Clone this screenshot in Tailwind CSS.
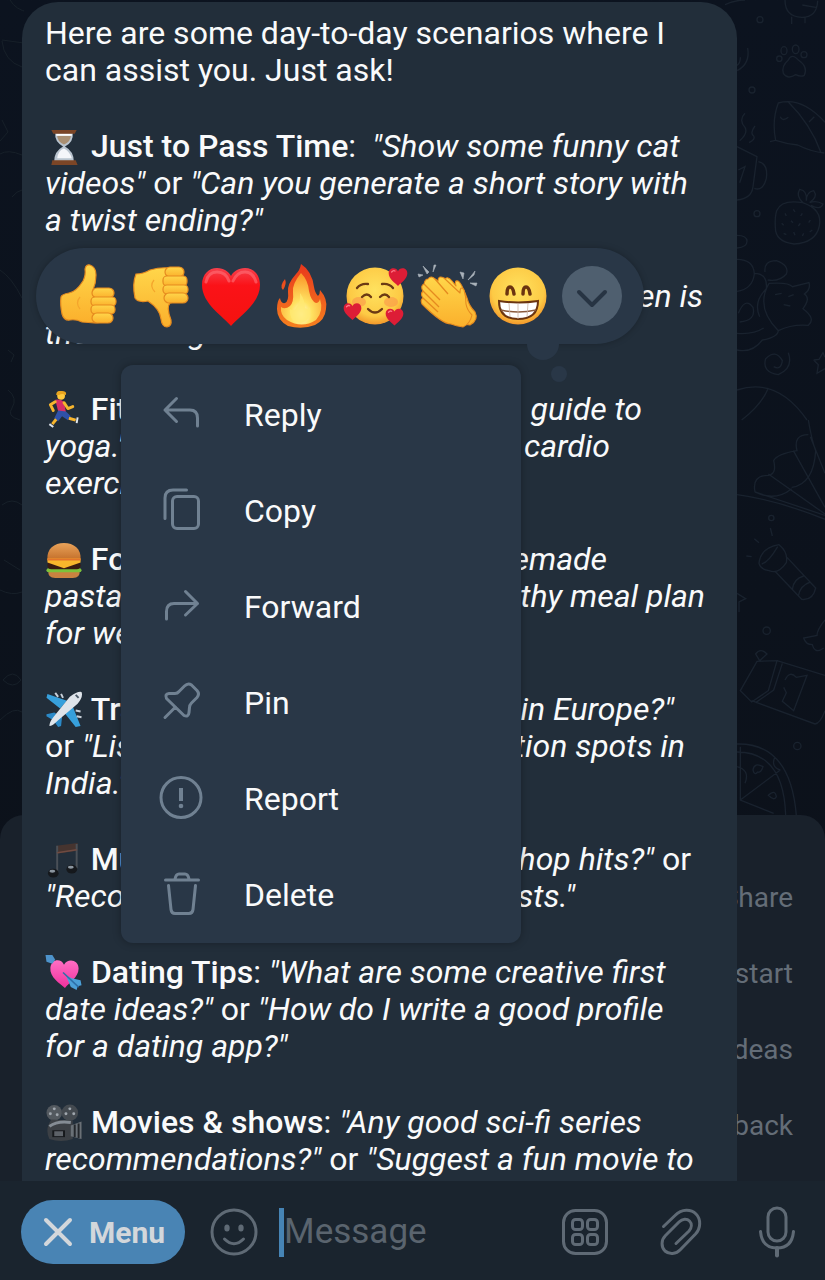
<!DOCTYPE html>
<html lang="en">
<head>
  <meta charset="UTF-8">
  <meta name="viewport" content="width=device-width, initial-scale=1.0">
  <title>Chat</title>
  <script src="https://cdn.jsdelivr.net/npm/@tailwindcss/browser@4"></script>
</head>
<body class="bg-[#0d1420] font-[Roboto,sans-serif]">
  <!-- shared gradients and shapes -->
  <svg class="absolute w-0 h-0" aria-hidden="true">
    <defs>
      <linearGradient id="skin" x1="0" y1="0" x2="0" y2="1"><stop offset="0" stop-color="#ffd64a"/><stop offset="1" stop-color="#fbb02c"/></linearGradient>
      <radialGradient id="face" cx=".5" cy=".4" r=".6"><stop offset="0" stop-color="#ffe25f"/><stop offset=".75" stop-color="#fdca45"/><stop offset="1" stop-color="#f3982b"/></radialGradient>
      <linearGradient id="red" x1="0" y1="0" x2="0" y2="1"><stop offset="0" stop-color="#f5404c"/><stop offset=".3" stop-color="#fb1218"/><stop offset="1" stop-color="#f5120f"/></linearGradient>
      <linearGradient id="outerFire" x1="0" y1="0" x2="0" y2="1"><stop offset="0" stop-color="#e8371c"/><stop offset="1" stop-color="#f5801f"/></linearGradient>
      <radialGradient id="innerFire" cx=".5" cy=".8" r=".75"><stop offset="0" stop-color="#fffbd0"/><stop offset=".35" stop-color="#ffe262"/><stop offset="1" stop-color="#fb9a2a"/></radialGradient>
      <linearGradient id="pink" x1="0" y1="0" x2="0" y2="1"><stop offset="0" stop-color="#ff6fc4"/><stop offset="1" stop-color="#f0309c"/></linearGradient>
      <linearGradient id="bun" x1="0" y1="0" x2="0" y2="1"><stop offset="0" stop-color="#e9a35a"/><stop offset="1" stop-color="#c4702b"/></linearGradient>
      <symbol id="heart" viewBox="0 0 60 60"><path d="M30 57C22 49 2 36 2 19C2 9 9 4 16 4c7 0 12 4 14 9C32 8 37 4 44 4c7 0 14 5 14 15C58 36 38 49 30 57z" fill="#dd1d36"/><path d="M11 15q5-6 10-3" stroke="#ff7a88" stroke-width="4" fill="none" stroke-linecap="round"/></symbol>
    </defs>
  </svg>

  <div class="relative h-screen flex flex-col overflow-hidden">
    <main class="relative flex-1 min-h-0 overflow-hidden bg-linear-to-b from-[#0c131f] to-[#0c1119]">
      <!-- wallpaper doodles -->
      <svg class="absolute left-0 top-0" width="24" height="820" viewBox="0 0 24 820" fill="none" stroke="#172029" stroke-width="1">
        <path d="M10 0q6 10 18 12M2 40l22 3M2 41q2 20 20 26M2 120l6 12-8 9M0 154q8-5 22 1M12 197q5-6 10-7M0 270q12 8 22 28M8 390q10 8 4 18q-6 8 8 12M2 505q10-8 20 0M4 560l16 10M8 350l6 5-3 7M0 590q12 6 22 2M3 680q10-12 18 0q-8 10-18 0M0 720q14-14 22-8"/>
      </svg>
      <svg class="absolute right-0 top-0" width="100" height="840" viewBox="0 0 300 2520" fill="none" stroke="#19222e" stroke-width="4">
        <path d="M180 0q0 50 50 52q46 0 48-50M232 15l44 8M200 50v22M240 50v20M0 14q30-14 60-14"/>
        <circle cx="105" cy="59" r="9"/><circle cx="81" cy="270" r="9"/><circle cx="96" cy="641" r="9"/>
        <path d="M36 212q40-20 32-68M36 196q10-6 10-24"/>
        <path d="M175 220q-6-22 15-40q10-22 30 0q30 20 18 46q-10 6-26-2q-24 16-37-4z"/>
        <ellipse cx="177" cy="152" rx="9" ry="12"/><ellipse cx="212" cy="148" rx="10" ry="13"/><circle cx="237" cy="164" r="9"/><circle cx="163" cy="176" r="8"/>
        <path d="M135 425l17-4q-12-60 8-112q70-20 140 58M188 304q70 70 100 154M152 421q30 10 66 14q40 20 80 24M166 350q6 16 24 2M252 366l16-16"/>
        <path d="M36 440l60 30l-12 90q-4 36-48 40M100 485q30 6 24 50q-10 40-36 30M60 340q-20 20 0 42q10 18-16 40M90 378q-16 22-4 30q6 10-14 20M40 510l20-10l-16 48"/>
        <path d="M155 632q14-34 78-24q60 20 50 70q-10 50-76 54q-56-6-56-50q-2-30 4-50zM234 608q-22-20-10-40q24 4 20 34q0-26 22-30q14 18-12 36q20-8 40 4q-8 20-36 4"/>
        <path d="M180 640l4 8M205 628l5 8M232 640l-5 8M170 670l6 6M198 662l6 6M226 670l-6 8M256 660l-5 8M176 700l8 4M206 696l4 10M236 700l-4 8M262 690l-8 6"/>
        <path d="M36 706q30 0 30 18t-30 20M36 778q50 0 52 44q-6 46-52 52M88 820q40 0 36 46q-40 40-20 84M120 816q-4-34 34-34q40 14 30 40q-20 24-56 18M132 850q60-4 70 10l50-12q6 20-14 34q20 12-4 44q40 30 16 50q-50-4-90 16q-70-70-28-142M36 1000q50 4 80-16M160 990q0 22-48 30q-30 40-76 30M150 884l20-4M206 884l-16 6M176 914l20 4M40 940q20-50 44-18q10 40-40 44"/>
        <path d="M190 1058q16 46-30 66q-50-8-38-48q30-30 50 6q-4 30-26 18M266 1080l16-2l12-20l6 14M266 1080l14 14l-4 26l24-14M36 1170q120-40 210 90M130 1164q-20 50-80 96"/>
        <path d="M250 1260q10 60 22 92q-6 100-72 110M250 1304q-46 0-34 48q-60 10-70 30q10 40-16 44q-50 0-40 50M90 1476l210 70M36 1484q120 16 264 74M130 1422l170 120M205 1352l95 170M256 1310l44 110M90 1476q60 30 110-10"/>
        <circle cx="139" cy="1554" r="8"/><path d="M136 1584l6 24M88 1616l14 12M64 1668l16 2"/>
        <path d="M102 1690q4-46 60-56q28 22 22 54q-24 36-52 24q-26-4-30-22zM110 1692q20-4 48-52M150 1714l80 84q34 4 42-34l-86-92M202 1768q4-32 34-40M220 1788q6-32 36-42"/>
        <circle cx="125" cy="1892" r="11"/><circle cx="217" cy="2238" r="11"/>
        <path d="M36 1780l26 16l-20 10v30M300 1860q-24 30-24 46l-40 8q6 20 26 20q8 30 34 10"/>
        <path d="M92 1962q14-20 34 0l-22 20zM46 2072l50-88l60-2l-26 90l-50 34zM156 1982l144 44M80 2102l190 70q16-2 30-40M172 1990l-26 80l-54 38M180 2040q14-30 34-8l32-6l-40 106l-34-28l12-26l-8-16"/>
        <path d="M36 2232q160-4 178 214M36 2256q140 0 146 190M46 2240v160l100 40M46 2400l120-90M84 2310q4-24 30-10q-6 20-16 16q-10 12-14-6zM130 2386q20-20 24 4q-6 14-24-4zM36 2300q40 10 24 50M166 2310q-30-10-16-40"/>
      </svg>

      <!-- bot keyboard, mostly covered by the message -->
      <ul class="absolute inset-x-0 bottom-0 h-[366px] rounded-t-3xl bg-[#19212b] pt-[45px] pr-8 text-right text-[28px] leading-[76px] text-[#646d77]">
        <li>Share</li>
        <li>Restart</li>
        <li>Ideas</li>
        <li>Feedback</li>
      </ul>

      <article class="relative mt-[2px] ml-[22px] mr-[88px] h-[1400px] rounded-t-[36px] bg-[#222e3a] pt-[13px] pl-[23px] pr-4 text-[32px] leading-[37px] text-[#f9fafb] whitespace-nowrap flex flex-col gap-[39px]">
        <p>Here are some day-to-day scenarios where I<br>can assist you. Just ask!</p>

        <p>
          <svg class="inline-block align-[-8px] w-[38px] h-[37px]" viewBox="0 0 38 38" aria-label="hourglass"><path d="M10 5H28Q29 15 20 19Q29 24 29 34H9Q9 24 18 19Q9 14 10 5z" fill="#b9c4cf"/><path d="M12 8H26Q26 14 19 17Q12 14 12 8z" fill="#a98f72"/><path d="M12 31q1-8 7-10q6 3 8 10z" fill="#f4f6fa"/><path d="M11 7h16" stroke="#fff" stroke-width="2"/><path d="M6 2h26l-2 4H8zM7 33h24l2 5H6z" fill="#7b4526"/></svg>
          <b class="font-medium">Just to Pass Time</b>: &nbsp;<i>"Show some funny cat<br>videos"</i> or <i>"Can you generate a short story with<br>a twist ending?"</i>
        </p>

        <p class="italic">
          <span class="flex justify-between w-[658px]"><b class="font-medium">Sports</b><span>"When is</span></span>
          the next big cricket match?"
        </p>

        <p class="italic">
          <span class="flex justify-between w-[597px]">
            <span><svg class="inline-block align-[-8px] w-[38px] h-[37px]" viewBox="0 0 38 38" aria-label="runner"><circle cx="16" cy="5" r="4" fill="#ffc93c"/><path d="M11 4q0-5 6-4q5 0 4 4q-4-2-7 0z" fill="#e9a51f"/><path d="M10 9q5-1 9 2l2 11q-5 2-8-1z" fill="#d92f66"/><path d="M10 11l-5 3l3 6M19 12l4 6l5-2" stroke="#f7b52e" stroke-width="3" fill="none" stroke-linecap="round" stroke-linejoin="round"/><path d="M13 20l8 1l5 5l-3 4l-6-4l-4 5l-4-3z" fill="#2f51a8"/><path d="M11 29l-4 5M24 28l7 2" stroke="#f7b52e" stroke-width="3" fill="none"/><path d="M4 34l4 3M33 27l-1 6" stroke="#dfe5ee" stroke-width="2"/></svg>
            <b class="font-medium not-italic">Fitness</b>: </span><span>guide to</span>
          </span>
          <span class="flex justify-between w-[565px]"><span>yoga." <span class="not-italic">or</span></span><span>cardio</span></span>
          exercises."
        </p>

        <p class="italic">
          <span class="flex justify-between w-[562px]">
            <span><svg class="inline-block align-[-8px] w-[38px] h-[37px]" viewBox="0 0 38 38" aria-label="burger"><path d="M2 19C1 8 9 2 19 2s18 6 17 17z" fill="url(#bun)"/><path d="M3 30h32q1 8-7 8H10q-8 0-7-8z" fill="#c98240"/><rect x="1" y="28" width="36" height="4" rx="2" fill="#7cc23a"/><rect x="2" y="21" width="34" height="8" rx="4" fill="#3a1c12"/><path d="M2 18h34v4l-17 6L2 22z" fill="#f9b72c"/><path d="M2 18h34v2H2z" fill="#e2742b"/></svg>
            <b class="font-medium not-italic">Food</b>:</span><span>homemade</span>
          </span>
          <span class="flex justify-between w-[660px]"><span>pasta?"</span><span>healthy meal plan</span></span>
          for weight loss."
        </p>

        <p class="italic">
          <span class="flex justify-between w-[629px]">
            <span><svg class="inline-block align-[-8px] w-[38px] h-[37px]" viewBox="0 0 38 38" aria-label="airplane"><path d="M22 10L2 3l-1 4l14 11zM28 16l8 20l-5 1l-11-14z" fill="#37a0dc"/><path d="M9 22l-8 2v2l7 4l5 7l3-1l1-9z" fill="#2b8ac8"/><path d="M37 1q2 5-4 12L13 30q-6 6-9 6q0-4 4-9L25 6q8-6 12-5z" fill="#dfe4ea"/><path d="M10 2l3 4M16 3l2 4M31 20l5 1M32 26l5 1" stroke="#c9d1da" stroke-width="2"/><path d="M31 4l3 3" stroke="#4b5866" stroke-width="2"/></svg>
            <b class="font-medium not-italic">Travel</b>:</span><span>in Europe?"</span>
          </span>
          <span class="flex justify-between w-[640px]"><span><span class="not-italic">or</span> "List</span><span>vacation spots in</span></span>
          India."
        </p>

        <p class="italic">
          <span class="flex justify-between w-[646px]">
            <span><svg class="inline-block align-[-8px] w-[38px] h-[37px]" viewBox="0 0 38 38" aria-label="music"><path d="M11 5L33 2v8L11 13z" fill="#46342f"/><path d="M12 5v28M32 3v25" stroke="#4a5057" stroke-width="2"/><path d="M12 12l20-3" stroke="#6f4b42" stroke-width="1.500"/><ellipse cx="8" cy="33" rx="5.500" ry="4.500" fill="#15181c"/><ellipse cx="27" cy="29" rx="5.500" ry="4.500" fill="#15181c"/><ellipse cx="7" cy="31" rx="3" ry="1.500" fill="#8b959f"/><ellipse cx="26" cy="27" rx="3" ry="1.500" fill="#8b959f"/></svg>
            <b class="font-medium not-italic">Music</b>:</span><span>hip-hop hits?" <span class="not-italic">or</span></span>
          </span>
          <span class="flex justify-between w-[530px]"><span>"Recommend</span><span>artists."</span></span>
        </p>

        <p>
          <svg class="inline-block align-[-8px] w-[38px] h-[37px]" viewBox="0 0 38 38" aria-label="heart with arrow"><path d="M4 5l8 7" stroke="#3c87c4" stroke-width="2"/><path d="M20 35C15 30 4 24 5 14c1-9 11-10 14-3c4-7 15-5 15 4c0 9-10 15-14 20z" fill="url(#pink)"/><path d="M0 1l7 0l3 5l-3 4l-6-2z" fill="#4d93cb"/><path d="M21 22l6 3l9 2l1 5l-4 1l-1 4l-6-3z" fill="#4ba0d8"/><path d="M18 19l16 15" stroke="#2d6fa8" stroke-width="1.500"/></svg>
          <b class="font-medium">Dating Tips</b>: <i>"What are some creative first<br>date ideas?"</i> or <i>"How do I write a good profile<br>for a dating app?"</i>
        </p>

        <p>
          <svg class="inline-block align-[-8px] w-[38px] h-[37px]" viewBox="0 0 38 38" aria-label="movie camera"><circle cx="9" cy="9" r="8" fill="#53595f"/><circle cx="25" cy="9" r="8.500" fill="#444a50"/><g fill="#a0a7ae"><circle cx="9" cy="5" r="1.500"/><circle cx="5" cy="10" r="1.500"/><circle cx="12" cy="11" r="1.500"/><circle cx="25" cy="5" r="1.500"/><circle cx="21" cy="10" r="1.500"/><circle cx="29" cy="10" r="1.500"/></g><path d="M6 16L28 17v19q-12 4-24 0q-5-10 2-20z" fill="#3c4045"/><path d="M4 23q8-6 22-4" stroke="#858c94" stroke-width="3" fill="none"/><rect x="7" y="27" width="13" height="7" fill="#17191c"/><rect x="9" y="28" width="9" height="5" fill="#5d6268"/><path d="M26 22l11-4v18l-11-3z" fill="#6a7076"/><path d="M30 21v13M34 20v15" stroke="#24272b" stroke-width="2"/></svg>
          <b class="font-medium">Movies &amp; shows</b>: <i>"Any good sci-fi series<br>recommendations?"</i> or <i>"Suggest a fun movie to</i>
        </p>
      </article>

      <!-- reactions -->
      <div class="absolute left-9 top-[248px] h-24 rounded-full bg-[#293747] px-[22px] flex items-center gap-3 shadow-[0_0_6px_rgba(0,0,0,0.25)] *:shrink-0">
        <button class="size-[60px]" aria-label="Thumbs up">
          <svg class="size-full overflow-visible" viewBox="0 0 60 60" stroke="#e58a1f" stroke-width="1.200" fill="url(#skin)"><path d="M3 31Q4 28 11 27Q18 26 25 15Q28 9 27 3Q28-2 32-1Q38 1 38 9Q38 17 35 24L52 28L53 55Q40 58 24 56Q18 53 12 54Q6 55 4 48Q2 38 3 31z"/><rect x="34" y="22" width="22" height="10" rx="5"/><rect x="33" y="31" width="25" height="9" rx="4"/><rect x="33" y="39" width="24" height="9" rx="4"/><rect x="34" y="47" width="21" height="10" rx="5"/><path d="M22 31q-5 6 0 12" fill="none" stroke="#f4a52c"/></svg>
        </button>
        <button class="size-[60px]" aria-label="Thumbs down">
          <svg class="size-full overflow-visible" viewBox="0 0 60 60" stroke="#e58a1f" stroke-width="1.200" fill="url(#skin)"><path d="M6 8Q13 8 20 4Q30 1 40 2L53 6L53 34L40 37Q36 41 41 54Q42 60 37 61Q32 61 31 53Q30 43 18 35Q8 37 5 32Q2 18 6 8z"/><rect x="35" y="1" width="19" height="10" rx="5"/><rect x="33" y="10" width="24" height="10" rx="4"/><rect x="33" y="19" width="25" height="9" rx="4"/><rect x="34" y="27" width="24" height="10" rx="5"/><path d="M24 14q-5 6 1 12" fill="none" stroke="#f4a52c"/></svg>
        </button>
        <button class="size-[60px]" aria-label="Love">
          <svg class="size-full overflow-visible" viewBox="0 0 60 60"><path d="M29 60C22 51 0 38 0 19C0 8 7 2 15 2c7 0 12 4 14 8c2-4 7-8 14-8c8 0 15 6 15 17C58 38 36 51 29 60z" fill="url(#red)"/><path d="M4 16Q6 6 15 6t12 9M31 15q4-9 12-9t11 10" stroke="#ff7078" stroke-width="3" fill="none" stroke-linecap="round" opacity=".6"/></svg>
        </button>
        <button class="size-[60px]" aria-label="Fire">
          <svg class="size-full overflow-visible" viewBox="0 0 60 60"><path d="M27-2Q38 5 40 21Q41 27 44 30Q46 28 46 24Q54 33 52 43Q51 54 41 59Q28 64 14 60Q3 54 3 43Q3 35 6 32Q7 38 11 37Q15 35 14 26Q13 18 22 8Q26 4 27-2zM11 13Q13 18 9 24Q5 20 11 13z" fill="url(#outerFire)"/><path d="M27 7Q34 14 35 25Q37 35 42 37Q45 37 46 33Q50 45 42 54Q28 63 13 54Q6 49 7 41Q11 44 16 40Q20 36 19 26Q18 18 27 7z" fill="url(#innerFire)"/><path d="M26 27Q31 34 31 42Q34 44 36 41Q38 54 27 57Q15 56 16 43Q20 46 22 42Q27 36 26 27z" fill="#ffe872" opacity=".8"/></svg>
        </button>
        <button class="size-[60px]" aria-label="Smiling face with hearts">
          <svg class="size-full overflow-visible" viewBox="0 0 60 60"><circle cx="29" cy="30" r="28.500" fill="url(#face)"/><ellipse cx="13" cy="36" rx="7" ry="5" fill="#f98a4a" opacity=".5"/><ellipse cx="45" cy="36" rx="7" ry="5" fill="#f98a4a" opacity=".5"/><g fill="none" stroke="#6b3a14" stroke-width="2.300" stroke-linecap="round"><path d="M11 22q4-5 11-4M36 18q7-1 11 4M16 31q5-5 9 0M34 31q5-5 9 0M22 43q7 7 14 0"/></g><use href="#heart" x="42" y="1" width="20" height="20"/><use href="#heart" x="-3" y="36" width="19" height="19"/><use href="#heart" x="39" y="41" width="19" height="20"/></svg>
        </button>
        <button class="size-[60px]" aria-label="Clap">
          <svg class="size-full overflow-visible" viewBox="0 0 60 60"><g fill="url(#skin)" stroke="#e58a1f" stroke-width="1.100" stroke-linejoin="round"><path d="M26 14Q29 9 34 15L38 20Q36 14 40 15Q43 16 49 32Q51 40 57 46Q61 54 52 59L44 58L26 30z"/><path d="M10 13Q13 9 17 13L20 15Q20 9 26 12L42 27Q42 19 46 24Q48 30 48 38Q49 44 54 49Q52 58 45 61Q38 60 33 58Q24 58 4 38Q2 34 5 32Q2 28 5 25Q2 20 6 18Q7 13 10 13z"/></g><path d="M6 18L22 34M5 25L21 41M5 32L20 46M17 13L30 28" stroke="#e58a1f" stroke-width="1.300" fill="none"/><path d="M0 8l5 1l-4 2zM5 0l6 6l-2 2zM16-1l2 0l-3 7zM42 6l4 1l-1 6zM57 5l-1 4l-6 5zM52 17l7 0l-1 3z" fill="#aab2ba" stroke="#aab2ba" stroke-width=".6"/></svg>
        </button>
        <button class="size-[60px]" aria-label="Grin">
          <svg class="size-full overflow-visible" viewBox="0 0 60 60"><circle cx="28" cy="30" r="28.500" fill="url(#face)"/><g fill="none" stroke="#6b3410" stroke-width="3.500" stroke-linecap="round"><path d="M17 28q0-7 3-7t4 7M33 28q0-7 3-7t4 7"/></g><path d="M9 35Q28 38 48 35Q48 53 28 53Q9 53 9 35z" fill="#fff" stroke="#6b3410" stroke-width="2"/><path d="M11 44q17 4 35 0" stroke="#8a5a3c" stroke-width="1.500" fill="none"/><path d="M19 37l1 14M28 37v16M38 37l-1 14" stroke="#c9b3a4" stroke-width=".8" fill="none"/></svg>
        </button>
        <button class="size-[60px] rounded-full bg-[#4f5f6f]" aria-label="More reactions">
          <svg class="size-full" viewBox="0 0 60 60" fill="none" stroke="#273443" stroke-width="4" stroke-linecap="round" stroke-linejoin="round"><path d="M17 26l13 13l13-13"/></svg>
        </button>
      </div>
      <div class="absolute left-[527px] top-[344px] h-4 w-8 rounded-b-full bg-[#293747]"></div>
      <div class="absolute left-[551px] top-[366px] size-4 rounded-full bg-[#293747]"></div>

      <!-- context menu -->
      <div role="menu" class="absolute left-[121px] top-[365px] w-[400px] rounded-xl bg-[#293747] pb-[2px] flex flex-col text-[32px] text-[#f9fafb] shadow-[0_0_8px_rgba(0,0,0,0.3)] *:h-24 *:flex *:items-center *:gap-[39px] *:pl-9">
        <button role="menuitem"><svg class="size-12 text-[#708192]" viewBox="0 0 48 48" fill="none" stroke="currentColor" stroke-width="3" stroke-linecap="round" stroke-linejoin="round"><path d="M19.500 9.500L8 21l11.500 11.500M8 21h25q7.500 0 7.500 8v8"/></svg><span class="pt-1">Reply</span></button>
        <button role="menuitem"><svg class="size-12 text-[#708192]" viewBox="0 0 48 48" fill="none" stroke="currentColor" stroke-width="3" stroke-linecap="round"><path d="M8 33.500V13q0-8 8-8h13.500"/><rect x="15.500" y="11.500" width="26" height="32" rx="4.500"/></svg><span class="pt-1">Copy</span></button>
        <button role="menuitem"><svg class="size-12 text-[#708192]" viewBox="0 0 48 48" fill="none" stroke="currentColor" stroke-width="3" stroke-linecap="round" stroke-linejoin="round"><path d="M28.500 10.500L40.500 22.500l-12 11.500M40.500 22.500H17q-7.500 0-7.500 8v7.500"/></svg><span class="pt-1">Forward</span></button>
        <button role="menuitem"><svg class="size-12 text-[#708192]" viewBox="0 0 48 48" fill="none" stroke="currentColor" stroke-width="3" stroke-linecap="round" stroke-linejoin="round"><path d="M8 40.500L18.500 30M9.500 21.500Q7.500 17 12 16.500L18 16.500Q20.500 16.500 22 14.500L27.500 9Q31 5.500 34.500 8L40 13.500Q43 17 40 20.500L34.500 26Q32.500 28 32.500 30.500L32 35.500Q31.500 40.500 27 38.500Z"/></svg><span class="pt-1">Pin</span></button>
        <button role="menuitem"><svg class="size-12 text-[#708192]" viewBox="0 0 48 48" fill="none" stroke="currentColor" stroke-width="3"><circle cx="24" cy="24.500" r="20"/><path d="M24 15v13" stroke-width="4"/><circle cx="24" cy="33" r="2.300" fill="currentColor" stroke="none"/></svg><span class="pt-1">Report</span></button>
        <button role="menuitem"><svg class="size-12 text-[#708192]" viewBox="0 0 48 48" fill="none" stroke="currentColor" stroke-width="3" stroke-linecap="round" stroke-linejoin="round"><path d="M8.500 11h33M18 10q1-5 4-5h6q3 0 4 5M11.500 16.500L14 40.500q.5 4 4 4h14q3.500 0 4-4L38.500 16.500"/></svg><span class="pt-1">Delete</span></button>
      </div>
    </main>

    <!-- message input -->
    <form class="relative bg-[#1a242e] pt-[19px] pb-4 pl-[21px] pr-6 flex items-center text-[#5f6a75]">
      <button type="button" class="h-16 shrink-0 rounded-full bg-[#4984b4] px-5 flex items-center gap-[14px] text-[30px] font-bold text-[#d3d7db]">
        <svg class="w-[34px] h-[34px]" viewBox="0 0 34 34" fill="none" stroke="currentColor" stroke-width="4" stroke-linecap="round"><path d="M5 5l24 24M29 5L5 29"/></svg>Menu
      </button>
      <button type="button" class="ml-[25px] shrink-0" aria-label="Emoji"><svg class="size-12" viewBox="0 0 48 48" fill="none" stroke="currentColor" stroke-width="3" stroke-linecap="round"><circle cx="24" cy="24" r="22"/><ellipse cx="17" cy="20" rx="2.700" ry="3.500" fill="currentColor" stroke="none"/><ellipse cx="31" cy="20" rx="2.700" ry="3.500" fill="currentColor" stroke="none"/><path d="M14.500 31q9.500 9.500 19 0"/></svg></button>
      <span class="ml-[21px] h-[49px] w-[5px] shrink-0 bg-[#4684b5]"></span>
      <input type="text" aria-label="Message" placeholder="Message" class="min-w-0 flex-1 bg-transparent text-[35px] outline-none placeholder:text-[#5a646e]">
      <div class="flex shrink-0 gap-12">
        <button type="button" aria-label="Commands"><svg class="size-12" viewBox="0 0 48 48" fill="none" stroke="currentColor" stroke-width="3"><rect x="2.500" y="2.500" width="43" height="43" rx="12"/><rect x="11.500" y="11.500" width="10" height="10" rx="3"/><rect x="26.500" y="11.500" width="10" height="10" rx="3"/><rect x="11.500" y="26.500" width="10" height="10" rx="3"/><rect x="26.500" y="26.500" width="10" height="10" rx="3"/></svg></button>
        <button type="button" aria-label="Attach"><svg class="size-12" viewBox="0 0 48 48" fill="none" stroke="currentColor" stroke-width="3" stroke-linecap="round"><path d="M6.500 18.500L18 7.500C25 .5 34 1 39 6C44 11 44 20 38.500 26L23.500 41.500C19 46.500 12 46.500 8 43C4 39 4 32 8.500 27.500L22 14C25.500 10.500 30 10.500 32.500 13C35 15.500 35 19.500 32 23L19 35.500"/></svg></button>
        <button type="button" aria-label="Voice message"><svg class="size-12 overflow-visible" viewBox="0 0 48 48" fill="none" stroke="currentColor" stroke-width="3" stroke-linecap="round"><rect x="15" y="0" width="18" height="33" rx="9"/><path d="M7.500 23.500Q9 40 24 40T40.500 23.500"/><path d="M24 40v7.500" stroke-width="4"/></svg></button>
      </div>
    </form>
  </div>
</body>
</html>
